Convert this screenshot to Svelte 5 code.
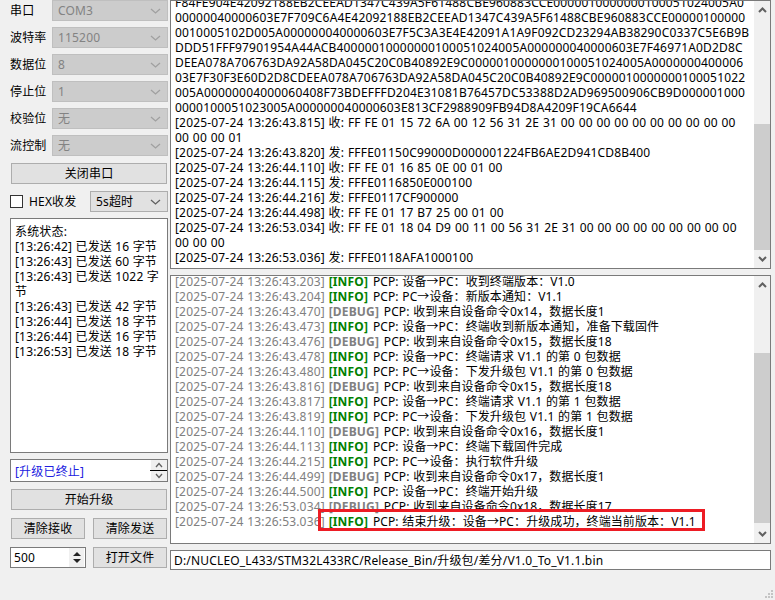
<script>
  const fields = [
    ['串口', 'COM3'],
    ['波特率', '115200'],
    ['数据位', '8'],
    ['停止位', '1'],
    ['校验位', '无'],
    ['流控制', '无']
  ]

  const status = [
    '[13:26:42] 已发送 16 字节',
    '[13:26:43] 已发送 60 字节',
    '[13:26:43] 已发送 1022 字节',
    '[13:26:43] 已发送 42 字节',
    '[13:26:44] 已发送 18 字节',
    '[13:26:44] 已发送 16 字节',
    '[13:26:53] 已发送 18 字节'
  ]

  const hex = [
    'F84FE904E42092188EB2CEEAD1347C439A5F61488CBE960883CCE0000010000000100051024005A0',
    '00000040000603E7F709C6A4E42092188EB2CEEAD1347C439A5F61488CBE960883CCE00000100000',
    '0010005102D005A000000040000603E7F5C3A3E4E42091A1A9F092CD23294AB38290C0337C5E6B9B',
    'DDD51FFF97901954A44ACB40000010000000100051024005A000000040000603E7F46971A0D2D8C',
    'DEEA078A706763DA92A58DA045C20C0B40892E9C0000010000000100051024005A0000000400006',
    '03E7F30F3E60D2D8CDEEA078A706763DA92A58DA045C20C0B40892E9C0000010000000100051022',
    '005A00000004000060408F73BDEFFFD204E31081B76457DC53388D2AD969500906CB9D000001000',
    '0000100051023005A000000040000603E813CF2988909FB94D8A4209F19CA6644',
    '[2025-07-24 13:26:43.815] 收: FF FE 01 15 72 6A 00 12 56 31 2E 31 00 00 00 00 00 00 00 00 00 00',
    '00 00 00 01',
    '[2025-07-24 13:26:43.820] 发: FFFE01150C99000D000001224FB6AE2D941CD8B400',
    '[2025-07-24 13:26:44.110] 收: FF FE 01 16 85 0E 00 01 00',
    '[2025-07-24 13:26:44.115] 发: FFFE0116850E000100',
    '[2025-07-24 13:26:44.216] 发: FFFE0117CF900000',
    '[2025-07-24 13:26:44.498] 收: FF FE 01 17 B7 25 00 01 00',
    '[2025-07-24 13:26:53.034] 收: FF FE 01 18 04 D9 00 11 00 56 31 2E 31 00 00 00 00 00 00 00 00 00',
    '00 00 00',
    '[2025-07-24 13:26:53.036] 发: FFFE0118AFA1000100'
  ]

  const logs = [
    ['43.203', 'INFO', 'PCP: 设备→PC：收到终端版本：V1.0'],
    ['43.204', 'INFO', 'PCP: PC→设备：新版本通知：V1.1'],
    ['43.470', 'DEBUG', 'PCP: 收到来自设备命令0x14，数据长度1'],
    ['43.473', 'INFO', 'PCP: 设备→PC：终端收到新版本通知，准备下载固件'],
    ['43.476', 'DEBUG', 'PCP: 收到来自设备命令0x15，数据长度18'],
    ['43.478', 'INFO', 'PCP: 设备→PC：终端请求 V1.1 的第 0 包数据'],
    ['43.480', 'INFO', 'PCP: PC→设备：下发升级包 V1.1 的第 0 包数据'],
    ['43.816', 'DEBUG', 'PCP: 收到来自设备命令0x15，数据长度18'],
    ['43.817', 'INFO', 'PCP: 设备→PC：终端请求 V1.1 的第 1 包数据'],
    ['43.819', 'INFO', 'PCP: PC→设备：下发升级包 V1.1 的第 1 包数据'],
    ['44.110', 'DEBUG', 'PCP: 收到来自设备命令0x16，数据长度1'],
    ['44.113', 'INFO', 'PCP: 设备→PC：终端下载固件完成'],
    ['44.215', 'INFO', 'PCP: PC→设备：执行软件升级'],
    ['44.499', 'DEBUG', 'PCP: 收到来自设备命令0x17，数据长度1'],
    ['44.500', 'INFO', 'PCP: 设备→PC：终端开始升级'],
    ['53.034', 'DEBUG', 'PCP: 收到来自设备命令0x18，数据长度17'],
    ['53.036', 'INFO', 'PCP: 结束升级：设备→PC：升级成功，终端当前版本：V1.1']
  ]
</script>

<main>
  <aside>
    <div class="fields">
      {#each fields as [label, value]}
        <div class="field">
          <span class="label">{label}</span>
          <div class="combo off">
            <span>{value}</span>
            <svg width="11" height="6" viewBox="0 0 11 6"><path d="M1 1l4.5 4L10 1" /></svg>
          </div>
        </div>
      {/each}
    </div>

    <button class="wide close">关闭串口</button>

    <div class="hexrow">
      <span class="check"></span>
      <span class="hexlabel">HEX收发</span>
      <div class="combo timeout">
        <span>5s超时</span>
        <svg width="11" height="6" viewBox="0 0 11 6"><path d="M1 1l4.5 4L10 1" /></svg>
      </div>
    </div>

    <div class="status">
      <div>系统状态:</div>
      {#each status as line}
        <div>{line}</div>
      {/each}
    </div>

    <div class="stage">
      <span>[升级已终止]</span>
      <div class="stagebtns">
        <svg width="8" height="7" viewBox="0 0 8 7"><path d="M1 5l3-3.5L7 5" /></svg>
        <svg width="8" height="7" viewBox="0 0 8 7"><path d="M1 2l3 3.5L7 2" /></svg>
      </div>
    </div>

    <button class="wide start">开始升级</button>

    <div class="pair">
      <button>清除接收</button>
      <button>清除发送</button>
    </div>

    <div class="pair last">
      <div class="spin">
        <span>500</span>
        <div class="spinbtns">
          <i class="up"></i>
          <i class="down"></i>
        </div>
      </div>
      <button>打开文件</button>
    </div>
  </aside>

  <section>
    <div class="panel top">
      <div class="lines hexlines">
        {#each hex as line}
          <div>{line}</div>
        {/each}
      </div>
      <div class="scroll">
        <svg width="9" height="6" viewBox="0 0 9 6"><path d="M1 5l3.5-3.5L8 5" /></svg>
        <div class="track"><div class="thumb"></div></div>
        <svg width="9" height="6" viewBox="0 0 9 6"><path d="M1 1l3.5 3.5L8 1" /></svg>
      </div>
    </div>

    <div class="panel bottom">
      <div class="lines loglines">
        {#each logs as [time, level, text]}
          <div>
            <span class="time">[2025-07-24 13:26:{time}]</span>
            <b class={level.toLowerCase()}>[{level}]</b>
            <span class="msg">{text}</span>
          </div>
        {/each}
      </div>
      <div class="scroll">
        <svg width="9" height="6" viewBox="0 0 9 6"><path d="M1 5l3.5-3.5L8 5" /></svg>
        <div class="track"><div class="thumb"></div></div>
        <svg width="9" height="6" viewBox="0 0 9 6"><path d="M1 1l3.5 3.5L8 1" /></svg>
      </div>
      <div class="marker"></div>
    </div>

    <div class="path">D:/NUCLEO_L433/STM32L433RC/Release_Bin/升级包/差分/V1.0_To_V1.1.bin</div>
  </section>

  <svg class="grip" width="10" height="10" viewBox="0 0 10 10">
    <path d="M7 1h2v2H7zM4 4h2v2H4zM7 4h2v2H7zM1 7h2v2H1zM4 7h2v2H4zM7 7h2v2H7z" />
  </svg>
</main>

<style>
:global(body) {
  background: #f0f0f0;
}

main {
  position: relative;
  display: flex;
  width: 775px;
  height: 600px;
  overflow: hidden;
  background: #f0f0f0;
  color: #000;
  font-family: "Noto Sans", "Noto Sans CJK SC", sans-serif;
  font-size: 12px;
  line-height: 15px;
  letter-spacing: 0.17px;
}

aside {
  width: 170px;
  flex: none;
  display: flex;
  flex-direction: column;
  align-items: flex-start;
  padding-left: 10px;
  box-sizing: border-box;
}

.fields {
  display: flex;
  flex-direction: column;
  gap: 6px;
}

.field {
  display: flex;
  align-items: center;
  height: 21px;
  width: 158px;
}

.label {
  width: 42px;
  flex: none;
}

.combo {
  box-sizing: border-box;
  height: 21px;
  flex: none;
  display: flex;
  align-items: center;
  justify-content: space-between;
  padding: 0 6px 0 5px;
  border: 1px solid #adadad;
  background: #e1e1e1;
}

.combo path,
.stagebtns path {
  fill: none;
  stroke: #606060;
  stroke-width: 1.3;
}

.scroll path {
  fill: none;
  stroke: #606060;
  stroke-width: 2;
}

.combo.off {
  width: 116px;
  background: #cccccc;
  border-color: #bfbfbf;
  color: #838383;
}

.combo.off path {
  stroke: #a0a0a0;
}

button {
  box-sizing: border-box;
  height: 21px;
  padding: 0;
  border: 1px solid #adadad;
  background: #e1e1e1;
  color: #000;
  font: inherit;
  letter-spacing: inherit;
}

.wide {
  width: 156px;
  margin-left: 1px;
}

.close {
  margin-top: 7px;
}

.hexrow {
  display: flex;
  align-items: center;
  width: 158px;
  height: 21px;
  margin-top: 7px;
}

.check {
  box-sizing: border-box;
  width: 13px;
  height: 13px;
  border: 1px solid #333;
  background: #fff;
  flex: none;
}

.hexlabel {
  margin-left: 6px;
  width: 61px;
  flex: none;
}

.timeout {
  width: 78px;
  padding-left: 5px;
  border-color: #adadad;
}

.status {
  box-sizing: border-box;
  width: 158px;
  height: 235px;
  margin-top: 6px;
  padding: 5px 4px;
  border: 1px solid #7a7a7a;
  background: #fff;
}

.stage {
  box-sizing: border-box;
  display: flex;
  justify-content: space-between;
  width: 158px;
  height: 23px;
  margin-top: 6px;
  padding-left: 4px;
  border: 1px solid #7a7a7a;
  background: #fff;
  color: #2020e0;
  line-height: 23px;
}

.stagebtns {
  position: relative;
  width: 16px;
  display: flex;
  flex-direction: column;
  align-items: center;
  justify-content: space-around;
  background: #f0f0f0;
}

/* black divider across the two little arrows */
.stagebtns::after {
  content: "";
  position: absolute;
  left: -1px;
  right: 0;
  top: 10px;
  height: 1px;
  background: #000;
}

.start {
  margin-top: 7px;
}

.pair {
  display: flex;
  justify-content: space-between;
  align-items: center;
  width: 157px;
  margin-top: 8px;
  padding-left: 1px;
  box-sizing: border-box;
}

.pair button {
  width: 74px;
}

.last {
  width: 157px;
  padding-left: 0;
}

.spin {
  box-sizing: border-box;
  width: 76px;
  height: 21px;
  display: flex;
  align-items: center;
  justify-content: space-between;
  padding-left: 3px;
  border: 1px solid #7a7a7a;
  background: #fff;
}

.spinbtns {
  width: 15px;
  height: 19px;
  display: flex;
  flex-direction: column;
  align-items: center;
  justify-content: space-evenly;
  background: #f0f0f0;
  margin-right: 1px;
}

.spinbtns i {
  width: 0;
  height: 0;
  border-left: 4px solid transparent;
  border-right: 4px solid transparent;
}

.spinbtns .up {
  border-bottom: 4px solid #222;
}

.spinbtns .down {
  border-top: 4px solid #222;
}

section {
  width: 601px;
  flex: none;
  display: flex;
  flex-direction: column;
}

.panel {
  position: relative;
  box-sizing: border-box;
  display: flex;
  border: 1px solid #7a7a7a;
  background: #fff;
  overflow: hidden;
}

.top {
  height: 269px;
}

.bottom {
  height: 269px;
  margin-top: 6px;
}

.lines {
  flex: 1;
  min-width: 0;
  padding-left: 4px;
  white-space: pre;
  overflow: hidden;
  word-spacing: 0.5px;
}

.hexlines {
  margin-top: -6px;
}

.loglines {
  margin-top: -2px;
}

.time {
  color: #808080;
}

b {
  font-weight: 700;
}

.info {
  color: #008000;
}

.debug {
  color: #808080;
}

.msg {
  margin-left: 1px;
  letter-spacing: 0.09px;
}

.scroll {
  width: 16px;
  flex: none;
  display: flex;
  flex-direction: column;
  align-items: center;
  background: #f0f0f0;
}

.scroll svg {
  flex: none;
  margin: 6px 0;
}

.track {
  flex: 1;
  width: 100%;
  display: flex;
  flex-direction: column;
  justify-content: flex-end;
}

.thumb {
  background: #cdcdcd;
}

.top .thumb {
  height: 126px;
}

.bottom .thumb {
  height: 170px;
  margin-bottom: 2px;
}

.marker {
  position: absolute;
  left: 147px;
  top: 233px;
  width: 387px;
  height: 22px;
  box-sizing: border-box;
  border: 3px solid #ed1c24;
}

.path {
  box-sizing: border-box;
  height: 20px;
  margin-top: 6px;
  padding-left: 3px;
  border: 1px solid #7a7a7a;
  background: #fff;
  line-height: 19px;
}

.grip {
  position: absolute;
  right: 1px;
  bottom: 1px;
}

.grip path {
  fill: #c4c4c4;
}
</style>
